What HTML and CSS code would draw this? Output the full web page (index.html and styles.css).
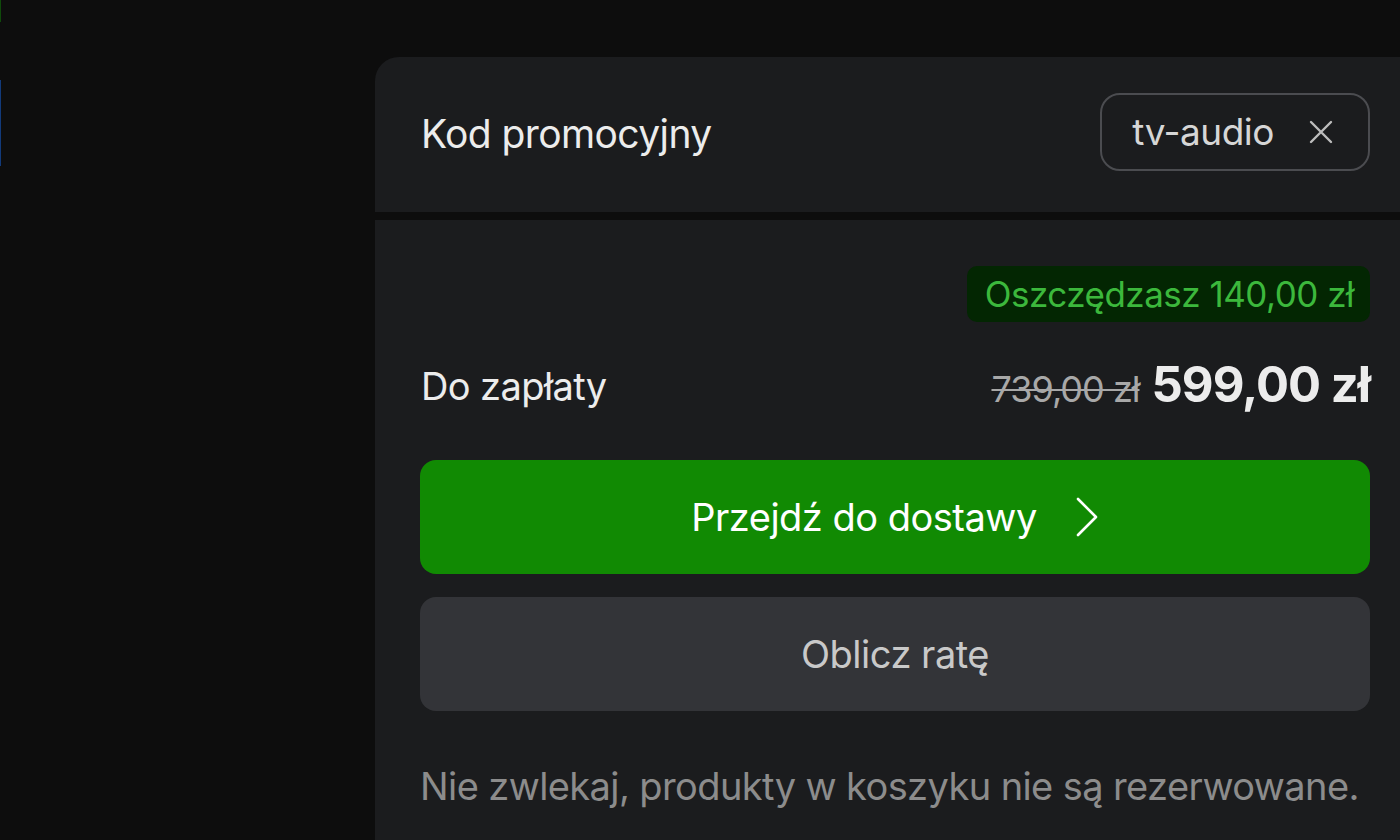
FILE: index.html
```html
<!DOCTYPE html>
<html lang="pl">
<head>
<meta charset="utf-8">
<title>Koszyk</title>
<link rel="stylesheet" href="styles.css">
</head>
<body>
<div class="page">
  <div class="edge">
    <span class="edge-green"></span>
    <span class="edge-blue"></span>
  </div>
  <aside class="card">
    <section class="promo">
      <span class="promo-title">Kod promocyjny</span>
      <div class="chip">
        <span class="chip-code">tv-audio</span>
        <svg class="chip-x" viewBox="0 0 24 24" width="24" height="24"><path d="M2 2L22 22M22 2L2 22" stroke="#bdbdbd" stroke-width="2.4" stroke-linecap="round" fill="none"/></svg>
      </div>
    </section>
    <section class="summary">
      <div class="badge">Oszczędzasz 140,00 zł</div>
      <div class="total-row">
        <span class="total-label">Do zapłaty</span>
        <span class="prices">
          <s class="old-price">739,00 zł</s>
          <strong class="new-price">599,00 zł</strong>
        </span>
      </div>
      <button class="btn btn-primary">Przejdź do dostawy
        <svg class="chev" viewBox="0 0 24 40" width="24" height="40"><path d="M3 2L21 20L3 38" stroke="#fff" stroke-width="2.6" stroke-linecap="round" stroke-linejoin="round" fill="none"/></svg>
      </button>
      <button class="btn btn-secondary">Oblicz ratę</button>
      <p class="note">Nie zwlekaj, produkty w koszyku nie są rezerwowane.</p>
    </section>
  </aside>
</div>
</body>
</html>
```

FILE: styles.css
```css
* { box-sizing: border-box; }
html, body {
  margin: 0;
  padding: 0;
  background: #0d0d0d;
  overflow: hidden;
}
body {
  font-family: "Inter", "Noto Sans", sans-serif;
  color: #ececec;
}
.page {
  width: 1400px;
  height: 840px;
  display: flex;
  padding-top: 57px;
  overflow: hidden;
}
.edge {
  width: 375px;
  flex: none;
  margin-top: -57px;
  display: flex;
  flex-direction: column;
}
.edge-green {
  display: block;
  width: 1px;
  height: 22px;
  background: #0f4a0a;
}
.edge-blue {
  display: block;
  width: 1px;
  height: 86px;
  margin-top: 58px;
  background: #123a7a;
}
.card {
  width: 1061px;
  flex: none;
  display: flex;
  flex-direction: column;
  gap: 8px;
  border-radius: 24px 0 0 0;
  overflow: hidden;
}
.promo {
  height: 155px;
  background: #1b1c1e;
  display: flex;
  align-items: center;
  justify-content: space-between;
  padding: 0 66px 0 46px;
}
.promo-title {
  font-size: 39px;
  letter-spacing: -0.6px;
  color: #ececec;
  margin-top: -2px;
}
.chip {
  height: 78px;
  margin-top: -6px;
  border: 2px solid #4b4c50;
  border-radius: 20px;
  display: flex;
  align-items: center;
  gap: 35px;
  padding: 0 35px 0 30px;
}
.chip-code {
  font-size: 37px;
  letter-spacing: -0.5px;
  color: #d6d6d6;
}
.chip-x { display: block; }
.summary {
  flex: 1;
  background: #1b1c1e;
  display: flex;
  flex-direction: column;
  padding: 46px 66px 0 45px;
}
.badge {
  align-self: flex-end;
  height: 56px;
  padding: 0 16px 0 18px;
  display: flex;
  align-items: center;
  border-radius: 10px;
  background: #032602;
  color: #3cb83c;
  font-size: 35px;
  letter-spacing: -0.5px;
}
.total-row {
  margin-top: 22px;
  height: 80px;
  display: flex;
  align-items: center;
  justify-content: space-between;
}
.total-label {
  font-size: 38px;
  letter-spacing: -0.6px;
  color: #ececec;
  padding-left: 1px;
  margin-top: 4px;
}
.prices {
  display: flex;
  align-items: baseline;
  gap: 12px;
}
.old-price {
  font-size: 36px;
  color: #a8a8a8;
  letter-spacing: -1px;
  text-decoration-thickness: 2px;
}
.new-price {
  font-size: 49px;
  font-weight: 700;
  color: #ececec;
  letter-spacing: -1px;
}
.btn {
  border: none;
  width: 100%;
  height: 114px;
  border-radius: 16px;
  font-family: inherit;
  font-size: 38px;
  letter-spacing: -0.5px;
  display: flex;
  align-items: center;
  justify-content: center;
}
.btn-primary {
  margin-top: 36px;
  background: #118a03;
  color: #ffffff;
  gap: 38px;
}
.chev { display: block; }
.btn-secondary {
  margin-top: 23px;
  background: #333438;
  color: #c9c9c9;
}
.note {
  margin: 52px 0 0;
  font-size: 38px;
  letter-spacing: -0.6px;
  color: #8c8c8c;
}
```
